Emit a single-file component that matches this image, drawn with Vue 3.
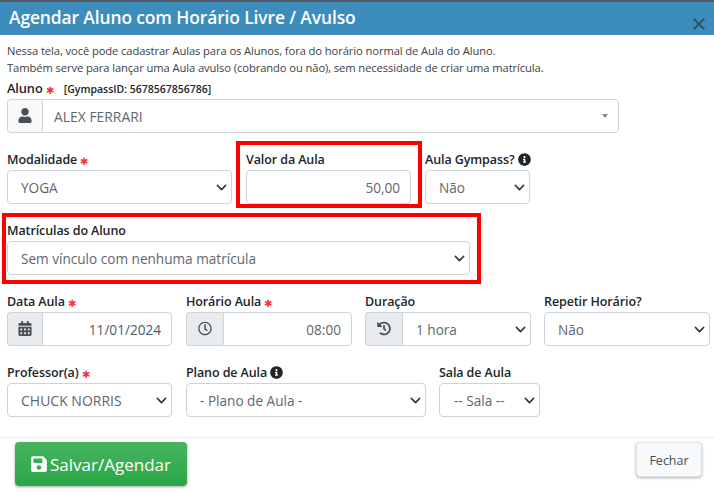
<script setup>
const icons = {
  user: { vb: '0 0 448 512', d: 'M224 256c70.7 0 128-57.3 128-128S294.7 0 224 0 96 57.3 96 128s57.3 128 128 128zm89.6 32h-16.7c-22.2 10.2-46.9 16-72.9 16s-50.6-5.8-72.9-16h-16.7C60.2 288 0 348.2 0 422.4V464c0 26.5 21.5 48 48 48h352c26.5 0 48-21.5 48-48v-41.6c0-74.2-60.2-134.4-134.4-134.4z' },
  calendar: { vb: '0 0 448 512', d: 'M0 464c0 26.5 21.5 48 48 48h352c26.5 0 48-21.5 48-48V192H0v272zm320-196c0-6.6 5.4-12 12-12h40c6.6 0 12 5.4 12 12v40c0 6.6-5.4 12-12 12h-40c-6.6 0-12-5.4-12-12v-40zm0 128c0-6.6 5.4-12 12-12h40c6.6 0 12 5.4 12 12v40c0 6.6-5.4 12-12 12h-40c-6.6 0-12-5.4-12-12v-40zM192 268c0-6.6 5.4-12 12-12h40c6.6 0 12 5.4 12 12v40c0 6.6-5.4 12-12 12h-40c-6.6 0-12-5.4-12-12v-40zm0 128c0-6.6 5.4-12 12-12h40c6.6 0 12 5.4 12 12v40c0 6.6-5.4 12-12 12h-40c-6.6 0-12-5.4-12-12v-40zM64 268c0-6.6 5.4-12 12-12h40c6.6 0 12 5.4 12 12v40c0 6.6-5.4 12-12 12H76c-6.6 0-12-5.4-12-12v-40zm0 128c0-6.6 5.4-12 12-12h40c6.6 0 12 5.4 12 12v40c0 6.6-5.4 12-12 12H76c-6.6 0-12-5.4-12-12v-40zM400 64h-48V16c0-8.8-7.2-16-16-16h-32c-8.8 0-16 7.2-16 16v48H160V16c0-8.8-7.2-16-16-16h-32c-8.8 0-16 7.2-16 16v48H48C21.5 64 0 85.5 0 112v48h448v-48c0-26.5-21.5-48-48-48z' },
  clock: { vb: '0 0 512 512', d: 'M256 8C119 8 8 119 8 256s111 248 248 248 248-111 248-248S393 8 256 8zm0 448c-110.5 0-200-89.5-200-200S145.5 56 256 56s200 89.5 200 200-89.5 200-200 200zm61.8-104.4l-84.9-61.7c-3.1-2.3-4.9-5.9-4.9-9.7V116c0-6.6 5.4-12 12-12h32c6.6 0 12 5.4 12 12v141.7l66.8 48.6c5.4 3.9 6.5 11.4 2.6 16.8L334.6 349c-3.9 5.3-11.4 6.5-16.8 2.6z' },
  history: { vb: '0 0 512 512', d: 'M504 255.531c.253 136.64-111.18 248.372-247.82 248.468-59.015.042-113.223-20.53-155.822-54.911-11.077-8.94-11.905-25.541-1.839-35.607l11.267-11.267c8.609-8.609 22.353-9.551 31.891-1.984C173.062 425.135 212.781 440 256 440c101.705 0 184-82.311 184-184 0-101.705-82.311-184-184-184-48.814 0-93.149 18.969-126.068 49.932l50.754 50.754c10.08 10.08 2.941 27.314-11.313 27.314H24c-8.837 0-16-7.163-16-16V38.627c0-14.254 17.234-21.393 27.314-11.314l49.372 49.372C129.209 34.136 189.552 8 256 8c136.81 0 247.747 110.78 248 247.531zm-180.912 78.784l9.823-12.63c8.138-10.463 6.253-25.542-4.21-33.679L288 256.349V152c0-13.255-10.745-24-24-24h-16c-13.255 0-24 10.745-24 24v135.651l65.409 50.874c10.463 8.137 25.541 6.253 33.679-4.21z' },
  save: { vb: '0 0 448 512', d: 'M433.941 129.941l-83.882-83.882A48 48 0 0 0 316.118 32H48C21.49 32 0 53.49 0 80v352c0 26.51 21.49 48 48 48h352c26.51 0 48-21.49 48-48V163.882a48 48 0 0 0-14.059-33.941zM224 416c-35.346 0-64-28.654-64-64 0-35.346 28.654-64 64-64s64 28.654 64 64c0 35.346-28.654 64-64 64zm96-304.52V212c0 6.627-5.373 12-12 12H76c-6.627 0-12-5.373-12-12V108c0-6.627 5.373-12 12-12h228.52c3.183 0 6.235 1.264 8.485 3.515l3.48 3.48A11.996 11.996 0 0 1 320 111.48z' },
  info: { vb: '0 0 512 512', d: 'M256 8C119.043 8 8 119.083 8 256c0 136.997 111.043 248 248 248s248-111.003 248-248C504 119.083 392.957 8 256 8zm0 110c23.196 0 42 18.804 42 42s-18.804 42-42 42-42-18.804-42-42 18.804-42 42-42zm56 254c0 6.627-5.373 12-12 12h-88c-6.627 0-12-5.373-12-12v-24c0-6.627 5.373-12 12-12h12v-64h-12c-6.627 0-12-5.373-12-12v-24c0-6.627 5.373-12 12-12h64c6.627 0 12 5.373 12 12v100h12c6.627 0 12 5.373 12 12v24z' }
}
</script>

<template>
  <div class="modal">
    <header class="head">
      <h1>Agendar Aluno com Horário Livre / Avulso</h1>
      <svg class="close" viewBox="0 0 16 16"><path d="M2 2 14 14M14 2 2 14" /></svg>
    </header>

    <main class="body">
      <p class="intro">Nessa tela, você pode cadastrar Aulas para os Alunos, fora do horário normal de Aula do Aluno.<br />Também serve para lançar uma Aula avulso (cobrando ou não), sem necessidade de criar uma matrícula.</p>

      <div class="field w612">
        <label class="lbl-aluno">Aluno <span class="req">✱</span><small>[GympassID: 5678567856786]</small></label>
        <div class="group">
          <span class="addon addon-light w35"><svg class="ico" :viewBox="icons.user.vb"><path :d="icons.user.d" /></svg></span>
          <div class="combo">ALEX FERRARI<i class="caret"></i></div>
        </div>
      </div>

      <div class="row row-a">
        <div class="field w225">
          <label>Modalidade <span class="req">✱</span></label>
          <select class="ctl"><option>YOGA</option></select>
        </div>
        <div class="field w165 boxed-valor">
          <label>Valor da Aula</label>
          <input class="ctl right" value="50,00" />
          <span class="mark"></span>
        </div>
        <div class="field w105">
          <label>Aula Gympass? <svg class="info" :viewBox="icons.info.vb"><path :d="icons.info.d" /></svg></label>
          <select class="ctl"><option>Não</option></select>
        </div>
      </div>

      <div class="field w463 boxed-mat">
        <label>Matrículas do Aluno</label>
        <select class="ctl"><option>Sem vínculo com nenhuma matrícula</option></select>
        <span class="mark"></span>
      </div>

      <div class="row row-c">
        <div class="field w165">
          <label>Data Aula <span class="req">✱</span></label>
          <div class="group">
            <span class="addon w35"><svg class="ico" :viewBox="icons.calendar.vb"><path :d="icons.calendar.d" /></svg></span>
            <input class="ctl joined right date" value="11/01/2024" />
          </div>
        </div>
        <div class="field w166">
          <label>Horário Aula <span class="req">✱</span></label>
          <div class="group">
            <span class="addon w37"><svg class="ico" :viewBox="icons.clock.vb"><path :d="icons.clock.d" /></svg></span>
            <input class="ctl joined right" value="08:00" />
          </div>
        </div>
        <div class="field w166">
          <label>Duração</label>
          <div class="group">
            <span class="addon w37"><svg class="ico" :viewBox="icons.history.vb"><path :d="icons.history.d" /></svg></span>
            <select class="ctl joined"><option>1 hora</option></select>
          </div>
        </div>
        <div class="field w166">
          <label>Repetir Horário?</label>
          <select class="ctl"><option>Não</option></select>
        </div>
      </div>

      <div class="row row-d">
        <div class="field w165">
          <label>Professor(a) <span class="req">✱</span></label>
          <select class="ctl upper"><option>CHUCK NORRIS</option></select>
        </div>
        <div class="field w240">
          <label>Plano de Aula <svg class="info" :viewBox="icons.info.vb"><path :d="icons.info.d" /></svg></label>
          <select class="ctl"><option>- Plano de Aula -</option></select>
        </div>
        <div class="field w101">
          <label>Sala de Aula</label>
          <select class="ctl tight"><option>-- Sala --</option></select>
        </div>
      </div>
    </main>

    <footer class="foot">
      <button class="save"><svg class="save-ico" :viewBox="icons.save.vb"><path :d="icons.save.d" /></svg>Salvar/Agendar</button>
      <button class="fechar">Fechar</button>
    </footer>
  </div>
</template>

<style>
html, body { margin: 0; background: #fff; }
</style>

<style scoped>
.modal {
  width: 714px;
  height: 492px;
  overflow: hidden;
  font-family: "Open Sans", "Noto Sans", sans-serif;
  color: #212529;
  background: #fff;
  box-sizing: border-box;
}
.head {
  height: 33px;
  border-top: 2px solid #555c63;
  background: #3c8dbc;
  display: flex;
  align-items: center;
  justify-content: space-between;
  padding: 0 9px;
}
.head h1 {
  margin: 0 0 2px;
  font-size: 17.4px;
  font-weight: 600;
  color: #fff;
  line-height: 29px;
  letter-spacing: -.1px;
}
.close { width: 14px; height: 14px; margin: 10px -1px 0 0; }
.close path { fill: none; stroke: #2f4f63; stroke-width: 2.2; }
.body { padding: 7px 0 0 7px; }
.intro {
  margin: 0;
  font-size: 11.2px;
  line-height: 17px;
  color: #3c4146;
  letter-spacing: -.09px;
}
.row { display: flex; }
.field { position: relative; flex: none; }
.w612 { width: 612px; }
.w463 { width: 463px; }
.w225 { width: 225px; }
.w165 { width: 165px; }
.w166 { width: 166px; }
.w105 { width: 105px; }
.w240 { width: 240px; }
.w101 { width: 101px; }
label {
  display: block;
  height: 21px;
  line-height: 21px;
  font-size: 12.5px;
  font-weight: 600;
  color: #212529;
  white-space: nowrap;
  letter-spacing: -.1px;
}
.lbl-aluno { font-size: 12.8px; height: 21px; margin-top: 2px; }
.lbl-aluno small {
  font-size: 10.5px;
  margin-left: 10px;
  font-weight: 600;
  letter-spacing: 0;
}
.req { color: #f5343c; font-size: 9.5px; font-weight: 400; vertical-align: -1px; }
.info { width: 13px; height: 13px; fill: #212529; vertical-align: -2px; }
.ctl {
  display: block;
  width: 100%;
  height: 34px;
  box-sizing: border-box;
  border: 1px solid #ced4da;
  border-radius: 4px;
  background: #fff;
  font-family: inherit;
  font-size: 13.6px;
  color: #5f666d;
  padding: 0 13px;
  outline: none;
}
select.ctl {
  appearance: none;
  -webkit-appearance: none;
  background-image: url("data:image/svg+xml,%3Csvg xmlns='http://www.w3.org/2000/svg' viewBox='0 0 16 16'%3E%3Cpath fill='none' stroke='%23343a40' stroke-linecap='round' stroke-linejoin='round' stroke-width='2.4' d='M2 5l6 6 6-6'/%3E%3C/svg%3E");
  background-repeat: no-repeat;
  background-position: right 4px center;
  background-size: 11px 11px;
}
.ctl.upper { font-size: 14px; }
.ctl.tight { padding: 0 10px 0 14px; }
.right { text-align: right; padding-right: 10px; }
.date { color: #495d70; }
.group { display: flex; height: 34px; }
.addon {
  flex: none;
  box-sizing: border-box;
  display: flex;
  align-items: center;
  justify-content: center;
  border: 1px solid #ced4da;
  border-right: 0;
  border-radius: 4px 0 0 4px;
  background: #e9ecef;
}
.addon-light { background: #f8f9fa; }
.w35 { width: 35px; }
.w37 { width: 37px; }
.ico { width: 14px; height: 15px; fill: #495057; margin-top: -2px; }
.joined { flex: 1; min-width: 0; width: auto; border-radius: 0 4px 4px 0; }
.combo {
  flex: 1;
  position: relative;
  box-sizing: border-box;
  border: 1px solid #ced4da;
  border-radius: 0 4px 4px 0;
  padding-left: 11px;
  line-height: 33px;
  font-size: 13.9px;
  color: #5f666d;
}
.caret {
  position: absolute;
  right: 10px;
  top: 14px;
  border-left: 3px solid transparent;
  border-right: 3px solid transparent;
  border-top: 4px solid #888;
}
.row-a { margin-top: 16px; }
.row-a .w225 { margin-right: 14px; }
.row-a .w165 { margin-right: 14px; }
.boxed-mat { margin-top: 16px; }
.row-c { margin-top: 16px; }
.row-c .w165 { margin-right: 14px; }
.row-c .w166 { margin-right: 13px; }
.row-d { margin-top: 16px; }
.row-d .w165 { margin-right: 14px; }
.row-d .w240 { margin-right: 13px; }
.mark {
  position: absolute;
  border: 4px solid #f00;
  box-sizing: border-box;
  pointer-events: none;
}
.boxed-valor .mark { left: -10px; right: -11px; top: -8px; bottom: -4px; }
.boxed-mat .mark { left: -5px; right: -11px; top: -7px; bottom: -9px; }
.foot {
  margin-top: 20px;
  height: 54px;
  border-top: 1px solid #e9ecef;
  display: flex;
  justify-content: space-between;
  align-items: flex-start;
  padding: 4px 12px 0 15px;
}
button { font-family: inherit; cursor: pointer; }
.save {
  width: 172px;
  height: 44px;
  padding: 0;
  border: 0;
  border-radius: 4px;
  background: linear-gradient(#48b461, #28a745);
  box-shadow: 0 1px 3px rgba(0,0,0,.35);
  color: #fff;
  font-size: 17px;
  display: flex;
  align-items: center;
  justify-content: center;
}
.save-ico { width: 16px; height: 18px; fill: #fff; margin-right: 3px; }
.fechar {
  width: 66px;
  height: 35px;
  padding: 2px 0 0;
  border: 1px solid #dee2e6;
  border-radius: 4px;
  background: #f8f9fa;
  box-shadow: 0 1px 3px rgba(0,0,0,.3);
  color: #495057;
  font-size: 12.5px;
}
</style>
